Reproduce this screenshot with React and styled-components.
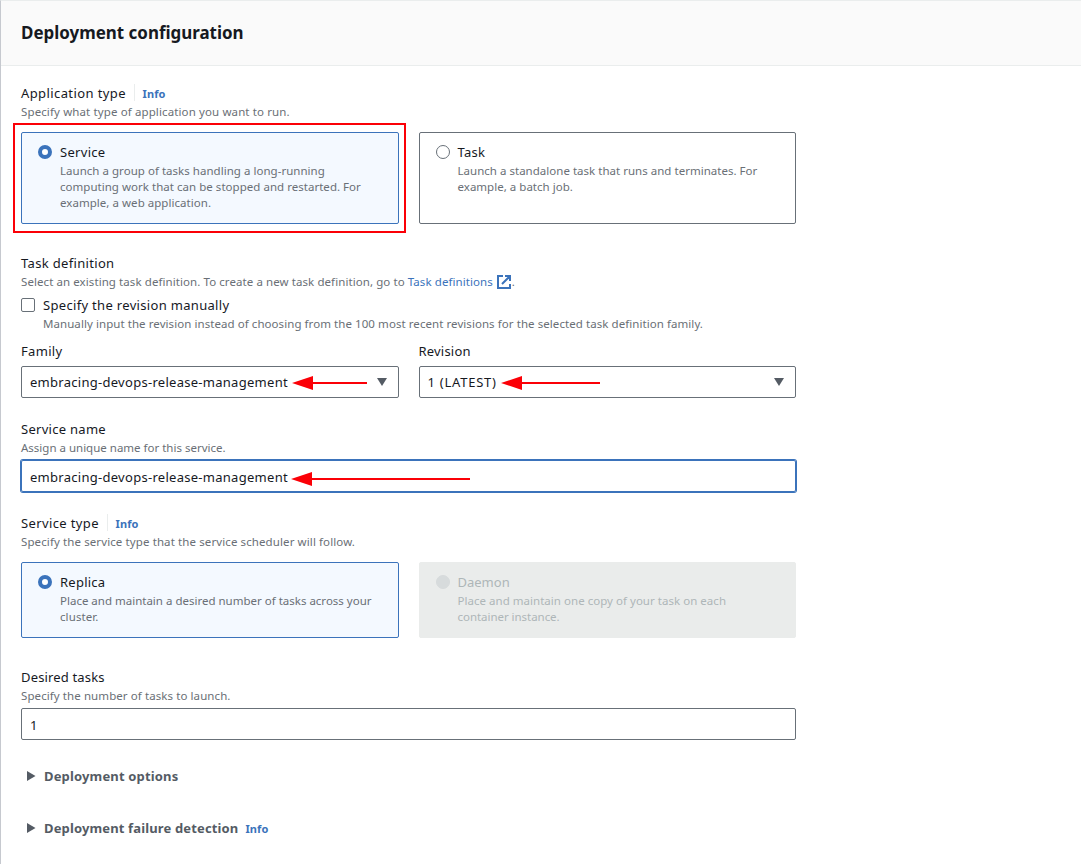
import React from "react";
import styled, { createGlobalStyle, css } from "styled-components";

const Global = createGlobalStyle`
  * { box-sizing: border-box; }
  body { margin: 0; background: #fff; color: #16191f; font-family: "Noto Sans", "Open Sans", sans-serif; }
`;

const Panel = styled.main`
  width: 1081px;
  height: 864px;
  overflow: hidden;
  border-top: 1px solid #eaeded;
  border-left: 1px solid #c6c9cf;
`;
const Header = styled.header`
  height: 65px;
  padding: 18px 20px 0;
  background: #fafafa;
  border-bottom: 1px solid #eaeded;
`;
const Title = styled.h1`
  margin: 0;
  font-size: 16.95px;
  line-height: 28px;
  font-weight: 700;
  white-space: nowrap;
`;
const Body = styled.div`
  width: 815px;
  padding: 16px 20px 0;
`;
const Field = styled.section`
  margin-bottom: ${(p) => p.$after ?? 20}px;
`;
const Columns = styled.div`
  display: grid;
  grid-template-columns: 1fr 1fr;
  gap: 20px;
  margin-top: ${(p) => p.$before || 0}px;
`;
const LabelRow = styled.div`
  display: flex;
  align-items: center;
  height: 22px;
`;
const Label = styled.span`
  font-size: 13px;
  line-height: 22px;
  white-space: nowrap;
  letter-spacing: ${(p) => p.$ls || 0}px;
`;
const Hint = styled.div`
  height: 16px;
  font-size: 11.5px;
  line-height: 16px;
  color: #6a6f76;
  white-space: nowrap;
  letter-spacing: ${(p) => p.$ls || 0}px;
`;
const Info = styled.a`
  font-size: 11px;
  line-height: 22px;
  font-weight: 700;
  color: #3b73bb;
  margin-left: 7px;
  padding-top: 1px;
  letter-spacing: 0.1px;
  ${(p) => p.$divided && css`
    height: 17px;
    line-height: 19px;
    margin: 0 0 1px 7.6px;
    padding: 0 0 0 8px;
    border-left: 1px solid #eaeded;
  `}
`;
const Link = styled.a`
  color: #3b73bb;
`;
const Tile = styled.div`
  position: relative;
  display: flex;
  gap: 8px;
  height: ${(p) => p.$h}px;
  padding: 8px 16px 12px;
  border: 1px solid #687078;
  border-radius: 2px;
  ${(p) => p.$selected && css`border-color: #3b73bb; background: #f4f9ff;`}
  ${(p) => p.$disabled && css`
    border-color: #eaeceb;
    background: #eaeceb;
    color: #aeb6b8;
    ${Hint} { color: #aeb6b8; }
  `}
`;
const Radio = styled.span`
  flex: none;
  width: 14px;
  height: 14px;
  margin-top: 4px;
  border-radius: 50%;
  border: 1px solid #687078;
  background: #fff;
  ${(p) => p.$selected && css`border: 4px solid #3b73bb;`}
  ${(p) => p.$disabled && css`border-color: #d7dbdc; background: #d7dbdc;`}
`;
const Highlight = styled.div`
  position: absolute;
  inset: -10px -8px -10px -9px;
  border: 2px solid #fb0007;
`;
const CheckRow = styled.div`
  display: flex;
  gap: 8px;
  margin-top: 4px;
`;
const Checkbox = styled.span`
  flex: none;
  width: 14px;
  height: 14px;
  margin-top: 4px;
  border: 1px solid #687078;
  border-radius: 2px;
`;
const Box = styled.div`
  position: relative;
  display: flex;
  align-items: center;
  height: 32px;
  margin-top: 4px;
  padding: ${(p) => (p.$input ? 2 : 0)}px 10px 0 8px;
  border: 1px solid #687078;
  border-radius: 2px;
  ${(p) => p.$focused && css`
    border-color: #3b73bb;
    box-shadow: 0 0 0 1px #3b73bb;
  `}
`;
const Caret = styled.svg`
  flex: none;
  margin-left: auto;
`;
const ArrowMark = styled.svg`
  position: absolute;
  top: ${(p) => p.$top}px;
  left: ${(p) => p.$left}px;
`;
const Expander = styled.div`
  display: flex;
  align-items: center;
  height: 22px;
  margin-bottom: 30px;
  padding-left: 6px;
  color: #545b64;
  ${Label} { font-weight: 700; margin-left: 8px; }
`;
const ExternalSvg = styled.svg`
  display: inline-block;
  vertical-align: -3px;
  margin: 0 1px 0 4px;
`;

const Arrow = ({ top, left, length }) => (
  <ArrowMark $top={top} $left={left} width={length} height="14" viewBox={`0 0 ${length} 14`}>
    <path d="M0 7 21 0v14z" fill="#fb0007" />
    <path d={`M20 7H${length}`} stroke="#fb0007" strokeWidth="2" />
  </ArrowMark>
);
const Down = () => (
  <Caret width="12" height="8" viewBox="0 0 12 8"><path d="M1 0h10L6 8z" fill="#545b64" /></Caret>
);
const Right = () => (
  <svg width="9" height="10" viewBox="0 0 9 10"><path d="M0 0v10L8.5 5z" fill="#545b64" /></svg>
);
const External = () => (
  <ExternalSvg width="14" height="14" viewBox="0 0 14 14" fill="none" stroke="#3b73bb" strokeWidth="2">
    <path d="M6 1H1v12h12V9M8 1h5v5M13 1 5 9" />
  </ExternalSvg>
);

const Option = ({ title, lines, height, selected, disabled, marked, ls = 0 }) => (
  <Tile $h={height} $selected={selected} $disabled={disabled}>
    <Radio $selected={selected} $disabled={disabled} />
    <div>
      <LabelRow><Label $ls={ls}>{title}</Label></LabelRow>
      {lines.map(([text, spacing]) => <Hint key={text} $ls={spacing}>{text}</Hint>)}
    </div>
    {marked && <Highlight />}
  </Tile>
);

export default function App() {
  return (
    <>
      <Global />
      <Panel>
        <Header><Title>Deployment configuration</Title></Header>
        <Body>
          <Field $after={28}>
            <LabelRow><Label $ls={0.4}>Application type</Label><Info $divided>Info</Info></LabelRow>
            <Hint $ls={0.12}>Specify what type of application you want to run.</Hint>
            <Columns $before={12}>
              <Option title="Service" ls={0.3} height={92} selected marked lines={[
                ["Launch a group of tasks handling a long-running", 0.03],
                ["computing work that can be stopped and restarted. For", 0.03],
                ["example, a web application.", 0.04],
              ]} />
              <Option title="Task" ls={0.3} height={92} lines={[
                ["Launch a standalone task that runs and terminates. For", 0.02],
                ["example, a batch job.", 0.02],
              ]} />
            </Columns>
          </Field>
          <Field $after={8}>
            <LabelRow><Label $ls={0.33}>Task definition</Label></LabelRow>
            <Hint $ls={0.08}>Select an existing task definition. To create a new task definition, go to <Link>Task definitions<External /></Link>.</Hint>
            <CheckRow>
              <Checkbox />
              <div>
                <LabelRow><Label $ls={0.32}>Specify the revision manually</Label></LabelRow>
                <Hint $ls={0.066}>Manually input the revision instead of choosing from the 100 most recent revisions for the selected task definition family.</Hint>
              </div>
            </CheckRow>
          </Field>
          <Field>
            <Columns>
              <div>
                <LabelRow><Label $ls={0.33}>Family</Label></LabelRow>
                <Box><Label $ls={0.28}>embracing-devops-release-management</Label><Down /><Arrow top={9} left={270} length={75} /></Box>
              </div>
              <div>
                <LabelRow><Label $ls={0.2}>Revision</Label></LabelRow>
                <Box><Label $ls={0.76}>1 (LATEST)</Label><Down /><Arrow top={9} left={81} length={99} /></Box>
              </div>
            </Columns>
          </Field>
          <Field>
            <LabelRow><Label $ls={0.28}>Service name</Label></LabelRow>
            <Hint>Assign a unique name for this service.</Hint>
            <Box $focused $input><Label $ls={0.28}>embracing-devops-release-management</Label><Arrow top={11} left={269} length={179} /></Box>
          </Field>
          <Field $after={28}>
            <LabelRow><Label $ls={0.38}>Service type</Label><Info $divided>Info</Info></LabelRow>
            <Hint $ls={0.105}>Specify the service type that the service scheduler will follow.</Hint>
            <Columns $before={12}>
              <Option title="Replica" ls={0.25} height={76} selected lines={[
                ["Place and maintain a desired number of tasks across your", 0],
                ["cluster.", 0.1],
              ]} />
              <Option title="Daemon" height={76} disabled lines={[
                ["Place and maintain one copy of your task on each", 0.03],
                ["container instance.", -0.04],
              ]} />
            </Columns>
          </Field>
          <Field $after={25}>
            <LabelRow><Label $ls={0.16}>Desired tasks</Label></LabelRow>
            <Hint $ls={0.085}>Specify the number of tasks to launch.</Hint>
            <Box $input><Label>1</Label></Box>
          </Field>
          <Expander><Right /><Label $ls={0.16}>Deployment options</Label></Expander>
          <Expander><Right /><Label $ls={0.14}>Deployment failure detection</Label><Info>Info</Info></Expander>
        </Body>
      </Panel>
    </>
  );
}
